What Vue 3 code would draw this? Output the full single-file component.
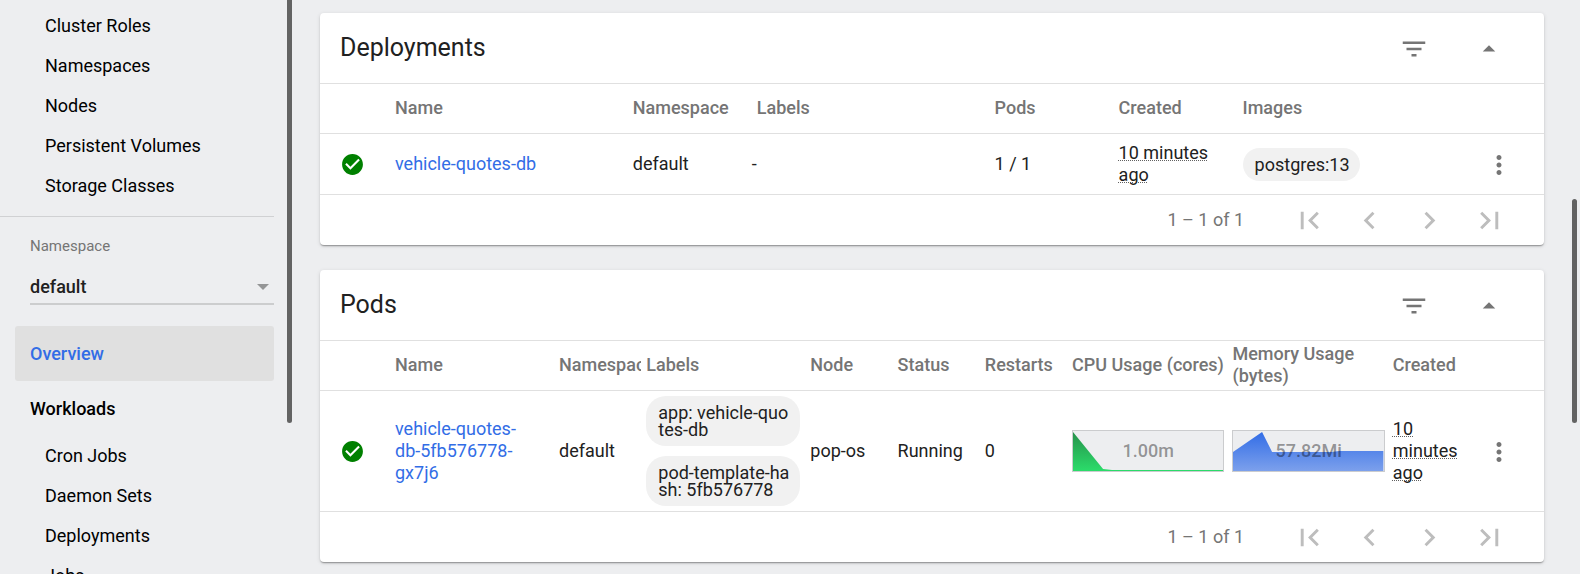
<script setup>
import { ref } from 'vue'

const clusterItems = ['Cluster Roles', 'Namespaces', 'Nodes', 'Persistent Volumes', 'Storage Classes']
const workloadItems = ['Cron Jobs', 'Daemon Sets', 'Deployments', 'Jobs']
const namespace = ref('default')

const pagerButtons = [
  { label: 'First page', path: 'M18.41 16.59L13.82 12l4.59-4.59L17 6l-6 6 6 6zM6 6h2v12H6z' },
  { label: 'Previous page', path: 'M15.41 7.41L14 6l-6 6 6 6 1.41-1.41L10.83 12z' },
  { label: 'Next page', path: 'M10 6L8.59 7.41 13.17 12l-4.58 4.59L10 18l6-6z' },
  { label: 'Last page', path: 'M5.59 7.41L10.18 12l-4.59 4.59L7 18l6-6-6-6zM16 6h2v12h-2z' }
]

const cards = [
  {
    id: 'deployments',
    title: 'Deployments',
    columns: [
      { key: 'name', label: 'Name', size: 'wide' },
      { key: 'namespace', label: 'Namespace', size: 'narrow' },
      { key: 'labels', label: 'Labels', size: 'wide' },
      { key: 'pods', label: 'Pods', size: 'narrow' },
      { key: 'created', label: 'Created', size: 'narrow' },
      { key: 'images', label: 'Images', size: 'rest' }
    ],
    row: {
      name: 'vehicle-quotes-db',
      namespace: 'default',
      labels: [],
      pods: '1 / 1',
      created: '10 minutes ago',
      images: ['postgres:13']
    }
  },
  {
    id: 'pods',
    title: 'Pods',
    columns: [
      { key: 'name', label: 'Name', size: 'wide' },
      { key: 'namespace', label: 'Namespace', size: 'narrow' },
      { key: 'labels', label: 'Labels', size: 'wide' },
      { key: 'node', label: 'Node', size: 'narrow' },
      { key: 'status', label: 'Status', size: 'narrow' },
      { key: 'restarts', label: 'Restarts', size: 'narrow' },
      { key: 'cpu', label: 'CPU Usage (cores)', size: 'chart' },
      { key: 'memory', label: 'Memory Usage (bytes)', size: 'chart' },
      { key: 'created', label: 'Created', size: 'rest' }
    ],
    row: {
      name: 'vehicle-quotes-db-5fb576778-gx7j6',
      namespace: 'default',
      labels: ['app: vehicle-quotes-db', 'pod-template-hash: 5fb576778'],
      node: 'pop-os',
      status: 'Running',
      restarts: '0',
      cpu: { text: '1.00m', points: '0,1 30,38 39,39 150,39 150,40 0,40' },
      memory: { text: '57.82Mi', points: '0,21 29,1 39,21 98,21 106,20 150,20 150,40 0,40' },
      created: '10 minutes ago'
    }
  }
]
</script>

<template>
  <div class="page">
    <aside class="sidebar">
      <nav class="nav" aria-label="Main">
        <ul class="nav-list">
          <li v-for="item in clusterItems" :key="item"><a class="nav-link" href="#">{{ item }}</a></li>
        </ul>
        <hr class="divider" />
        <div class="namespace">
          <label class="namespace-label" for="namespace">Namespace</label>
          <div class="select-wrap">
            <select id="namespace" v-model="namespace" class="select">
              <option>default</option>
            </select>
            <svg class="select-arrow" viewBox="0 0 12 6" aria-hidden="true"><path d="M0 0h12L6 6z" /></svg>
          </div>
        </div>
        <a class="nav-top active" href="#">Overview</a>
        <a class="nav-top" href="#">Workloads</a>
        <ul class="nav-list">
          <li v-for="item in workloadItems" :key="item"><a class="nav-link" href="#">{{ item }}</a></li>
        </ul>
      </nav>
      <div class="thumb nav-thumb" aria-hidden="true"></div>
    </aside>

    <main class="content">
      <section v-for="card in cards" :key="card.id" class="card" :class="card.id">
        <header class="card-header">
          <h2 class="card-title">{{ card.title }}</h2>
          <button class="icon-button filter" type="button" aria-label="Filter">
            <svg viewBox="0 0 24 24"><path d="M10 18h4v-2h-4v2zM3 6v2h18V6H3zm3 7h12v-2H6v2z" /></svg>
          </button>
          <button class="icon-button" type="button" aria-label="Collapse">
            <svg viewBox="0 0 24 24"><path d="M7 14l5-5 5 5z" /></svg>
          </button>
        </header>
        <table class="table">
          <thead>
            <tr>
              <th class="status-col"></th>
              <th v-for="col in card.columns" :key="col.key" scope="col" :class="col.size">
                <div :class="{ clip: col.key === 'namespace' }">{{ col.label }}</div>
              </th>
              <th class="menu-col"></th>
            </tr>
          </thead>
          <tbody>
            <tr>
              <td class="status-col">
                <svg class="ok" viewBox="0 0 24 24" role="img" aria-label="Healthy">
                  <path d="M12 2C6.48 2 2 6.48 2 12s4.48 10 10 10 10-4.48 10-10S17.52 2 12 2zm-2 15l-5-5 1.41-1.41L10 14.17l7.59-7.59L19 8l-9 9z" />
                </svg>
              </td>
              <td v-for="col in card.columns" :key="col.key" :class="col.size">
                <a v-if="col.key === 'name'" class="name" href="#">{{ card.row.name }}</a>
                <div v-else-if="col.key === 'labels' || col.key === 'images'" class="chips">
                  <span v-for="chip in card.row[col.key]" :key="chip" class="chip">{{ chip }}</span>
                  <span v-if="!card.row[col.key].length" class="none">-</span>
                </div>
                <div v-else-if="col.size === 'chart'" class="sparkline">
                  <svg viewBox="0 0 150 40" preserveAspectRatio="none" aria-hidden="true">
                    <defs>
                      <linearGradient :id="'fill-' + col.key" x1="0" y1="0" x2="0" y2="1">
                        <stop offset="0" :class="col.key + '-start'" />
                        <stop offset="1" :class="col.key + '-end'" />
                      </linearGradient>
                    </defs>
                    <polygon :points="card.row[col.key].points" :fill="`url(#fill-${col.key})`" />
                  </svg>
                  <span class="sparkline-value">{{ card.row[col.key].text }}</span>
                </div>
                <abbr v-else-if="col.key === 'created'" class="time">{{ card.row.created }}</abbr>
                <template v-else>{{ card.row[col.key] }}</template>
              </td>
              <td class="menu-col">
                <button class="icon-button menu" type="button" aria-label="Actions">
                  <svg viewBox="0 0 24 24"><path d="M12 8c1.1 0 2-.9 2-2s-.9-2-2-2-2 .9-2 2 .9 2 2 2zm0 2c-1.1 0-2 .9-2 2s.9 2 2 2 2-.9 2-2-.9-2-2-2zm0 6c-1.1 0-2 .9-2 2s.9 2 2 2 2-.9 2-2-.9-2-2-2z" /></svg>
                </button>
              </td>
            </tr>
          </tbody>
        </table>
        <footer class="pager">
          <span class="range">1 – 1 of 1</span>
          <button v-for="b in pagerButtons" :key="b.label" class="pager-button" type="button" disabled :aria-label="b.label">
            <svg viewBox="0 0 24 24"><path :d="b.path" /></svg>
          </button>
        </footer>
      </section>
      <div class="thumb page-thumb" aria-hidden="true"></div>
    </main>
  </div>
</template>

<style>
body {
  margin: 0;
  background: #edeef0;
}
</style>

<style scoped>
* {
  box-sizing: border-box;
}

.page {
  display: flex;
  height: 100vh;
  overflow: hidden;
  background: #edeef0;
  color: #212121;
  font-family: Roboto, "Liberation Sans", sans-serif;
  font-size: 18px;
  line-height: 22px;
}

button {
  display: flex;
  align-items: center;
  justify-content: center;
  padding: 0;
  border: 0;
  background: none;
  color: #757575;
}

svg {
  display: block;
  fill: currentColor;
}

/* Sidebar */
.sidebar {
  position: relative;
  flex: 0 0 292px;
  overflow: hidden;
}

.nav {
  padding: 6px 18px 0 0;
}

.nav-list {
  margin: 0;
  padding: 0 0 0 45px;
  list-style: none;
}

.nav-link {
  display: block;
  color: #000;
  line-height: 40px;
  text-decoration: none;
}

.divider {
  height: 1px;
  margin: 10px 0 0;
  border: 0;
  background: #d0d1d3;
}

.namespace {
  padding: 18px 0 21px 30px;
}

.namespace-label {
  display: block;
  color: #757575;
  font-size: 15px;
}

.select-wrap {
  position: relative;
  margin-top: 10px;
  border-bottom: 2px solid #cccdce;
}

.select {
  display: block;
  width: 100%;
  height: 36px;
  padding: 4px 0 0;
  border: 0;
  appearance: none;
  background: none;
  color: #212121;
  font: inherit;
  font-weight: 500;
}

.select-arrow {
  position: absolute;
  top: 17px;
  right: 5px;
  width: 12px;
  height: 6px;
  color: #949596;
  pointer-events: none;
}

.nav-top {
  display: block;
  margin-left: 15px;
  padding-left: 15px;
  border-radius: 3px;
  color: #000;
  font-weight: 500;
  line-height: 55px;
  text-decoration: none;
}

.nav-top.active {
  background: #e0e0e0;
  color: #326de6;
}

.thumb {
  position: absolute;
  width: 5px;
  border-radius: 3px;
  background: #636363;
}

.nav-thumb {
  top: -4px;
  right: 0;
  height: 427px;
}

.page-thumb {
  top: 199px;
  right: 3px;
  height: 224px;
}

/* Cards */
.content {
  position: relative;
  flex: 1;
  min-width: 0;
  overflow: hidden;
  padding: 13px 36px 0 28px;
}

.card {
  margin-bottom: 25px;
  border-radius: 4px;
  background: #fff;
  box-shadow: 0 2px 2px -1px rgba(0, 0, 0, 0.25), 0 1px 1px rgba(0, 0, 0, 0.14), 0 1px 4px rgba(0, 0, 0, 0.12);
}

.card-header {
  display: flex;
  align-items: center;
  height: 71px;
  padding: 0 30px 0 20px;
  border-bottom: 1px solid #e0e0e0;
}

.card-title {
  flex: 1;
  margin: 0;
  font-size: 25px;
  font-weight: 400;
  line-height: 32px;
}

.icon-button {
  width: 50px;
  height: 50px;
  margin-top: 2px;
}

.icon-button svg {
  width: 30px;
  height: 30px;
}

.filter {
  margin-right: 25px;
}

.table {
  width: 100%;
  border-collapse: separate;
  border-spacing: 0;
  table-layout: fixed;
}

th,
td {
  padding: 0 5px 0 0;
  border-bottom: 1px solid #e0e0e0;
  text-align: left;
  vertical-align: middle;
}

th {
  height: 50px;
  padding-bottom: 2px;
  color: #757575;
  font-weight: 500;
}

td {
  height: 61px;
}

.status-col {
  width: 75px;
  padding: 0 0 0 20px;
}

.menu-col {
  width: 64px;
  padding: 0;
}

.deployments .wide {
  width: 19.43%;
}

.deployments .narrow {
  width: 10.13%;
}

.pods .wide {
  width: 13.4%;
  padding-right: 10px;
}

.pods .narrow {
  width: 7.13%;
}

.chart {
  width: 13.1%;
  padding-right: 8px;
}

.clip {
  overflow: hidden;
  white-space: nowrap;
}

.ok {
  width: 25px;
  height: 25px;
  color: #008000;
}

.name {
  display: block;
  margin-right: 30px;
  color: #326de6;
  text-decoration: none;
}

.chips {
  display: flex;
  flex-direction: column;
  align-items: flex-start;
  gap: 10px;
  padding: 5px 0;
}

.chip {
  padding: 8px 10px 8px 12px;
  border-radius: 20px;
  background: #f1f1f1;
  line-height: 17px;
  word-break: break-all;
}

.none {
  margin-left: -5px;
}

.sparkline {
  position: relative;
  height: 42px;
  border: 1px solid #cbccce;
  background: #edeef0;
}

.sparkline svg {
  width: 100%;
  height: 40px;
}

.sparkline-value {
  position: absolute;
  inset: 0;
  color: rgba(0, 0, 0, 0.4);
  font-weight: 500;
  line-height: 40px;
  text-align: center;
}

.cpu-start {
  stop-color: #27914b;
}

.cpu-end {
  stop-color: #2bdc6a;
}

.memory-start {
  stop-color: #326de6;
}

.memory-end {
  stop-color: #7ca0ec;
}

.time {
  text-decoration: underline dotted 1px #616161;
}

.menu {
  width: 38px;
  margin-left: 0;
}

.pager {
  display: flex;
  align-items: center;
  justify-content: flex-end;
  height: 50px;
  padding-right: 25px;
  color: #757575;
}

.range {
  margin-right: 35px;
}

.pager-button {
  width: 60px;
  height: 50px;
  color: #bdbdbd;
}

.pager-button svg {
  width: 35px;
  height: 35px;
}
</style>
